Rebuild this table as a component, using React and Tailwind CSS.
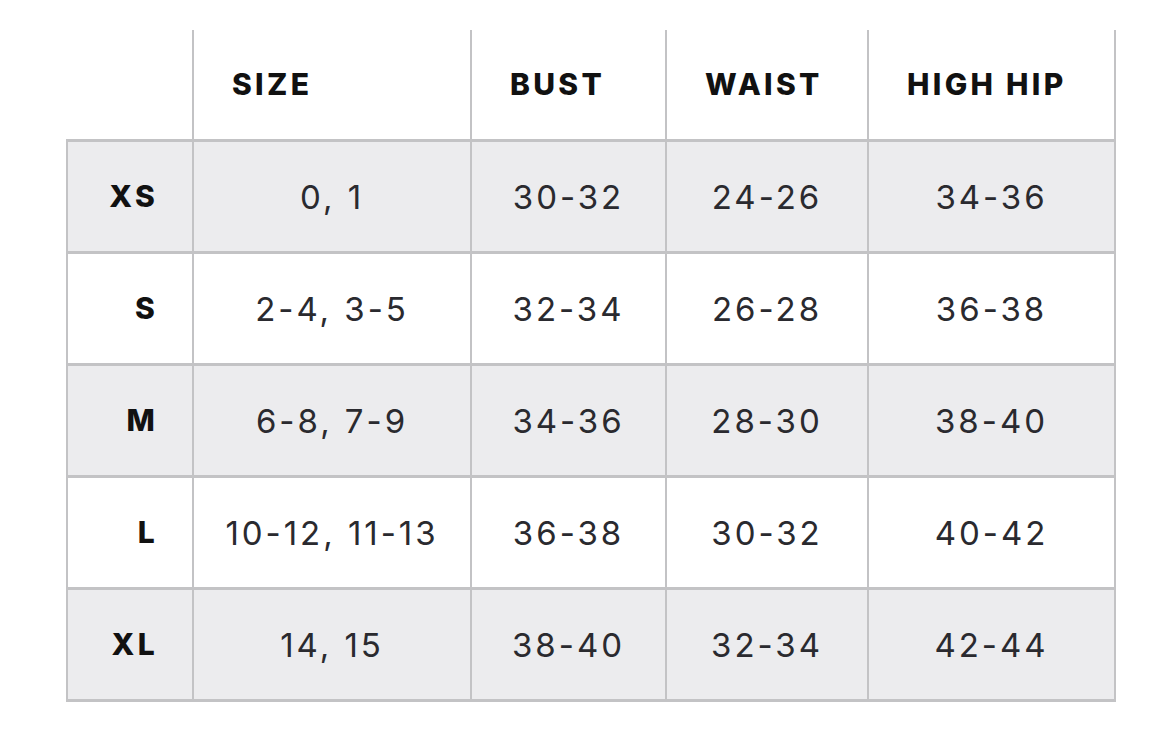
import React from 'react';

const headers = ['SIZE', 'BUST', 'WAIST', 'HIGH HIP'];

const rows = [
  { label: 'XS', size: '0, 1', bust: '30-32', waist: '24-26', hip: '34-36' },
  { label: 'S', size: '2-4, 3-5', bust: '32-34', waist: '26-28', hip: '36-38' },
  { label: 'M', size: '6-8, 7-9', bust: '34-36', waist: '28-30', hip: '38-40' },
  { label: 'L', size: '10-12, 11-13', bust: '36-38', waist: '30-32', hip: '40-42' },
  { label: 'XL', size: '14, 15', bust: '38-40', waist: '32-34', hip: '42-44' },
];

const App = () => {
  return (
    <div className="w-[1170px] h-[731px] bg-white pl-[66px] pt-[30px] font-['Inter',sans-serif]">
      <table className="border-collapse table-fixed w-[1048px]">
        <colgroup>
          <col className="w-[126px]" />
          <col className="w-[278px]" />
          <col className="w-[195px]" />
          <col className="w-[202px]" />
          <col className="w-[247px]" />
        </colgroup>
        <thead>
          <tr className="h-[110px]">
            <th className="border-b-[3px] border-[#c3c3c5]"></th>
            {headers.map((h) => (
              <th
                key={h}
                className="border-x-2 border-b-[3px] border-[#c3c3c5] text-left pl-[38px] text-[30px] font-extrabold tracking-[0.11em] text-[#111]"
              >
                {h}
              </th>
            ))}
          </tr>
        </thead>
        <tbody>
          {rows.map((r, i) => (
            <tr key={r.label} className={`h-[112px] ${i % 2 === 0 ? 'bg-[#ececee]' : 'bg-white'}`}>
              <td className="border-x-2 border-b-[3px] border-[#c3c3c5] text-right pr-[34px] text-[30px] font-extrabold tracking-[0.11em] text-[#111]">
                {r.label}
              </td>
              {[r.size, r.bust, r.waist, r.hip].map((v, j) => (
                <td
                  key={j}
                  className="border-x-2 border-b-[3px] border-[#c3c3c5] text-center pt-[3px] text-[33px] tracking-[0.09em] text-[#2a2a2f]"
                >
                  {v}
                </td>
              ))}
            </tr>
          ))}
        </tbody>
      </table>
    </div>
  );
};

export default App;
